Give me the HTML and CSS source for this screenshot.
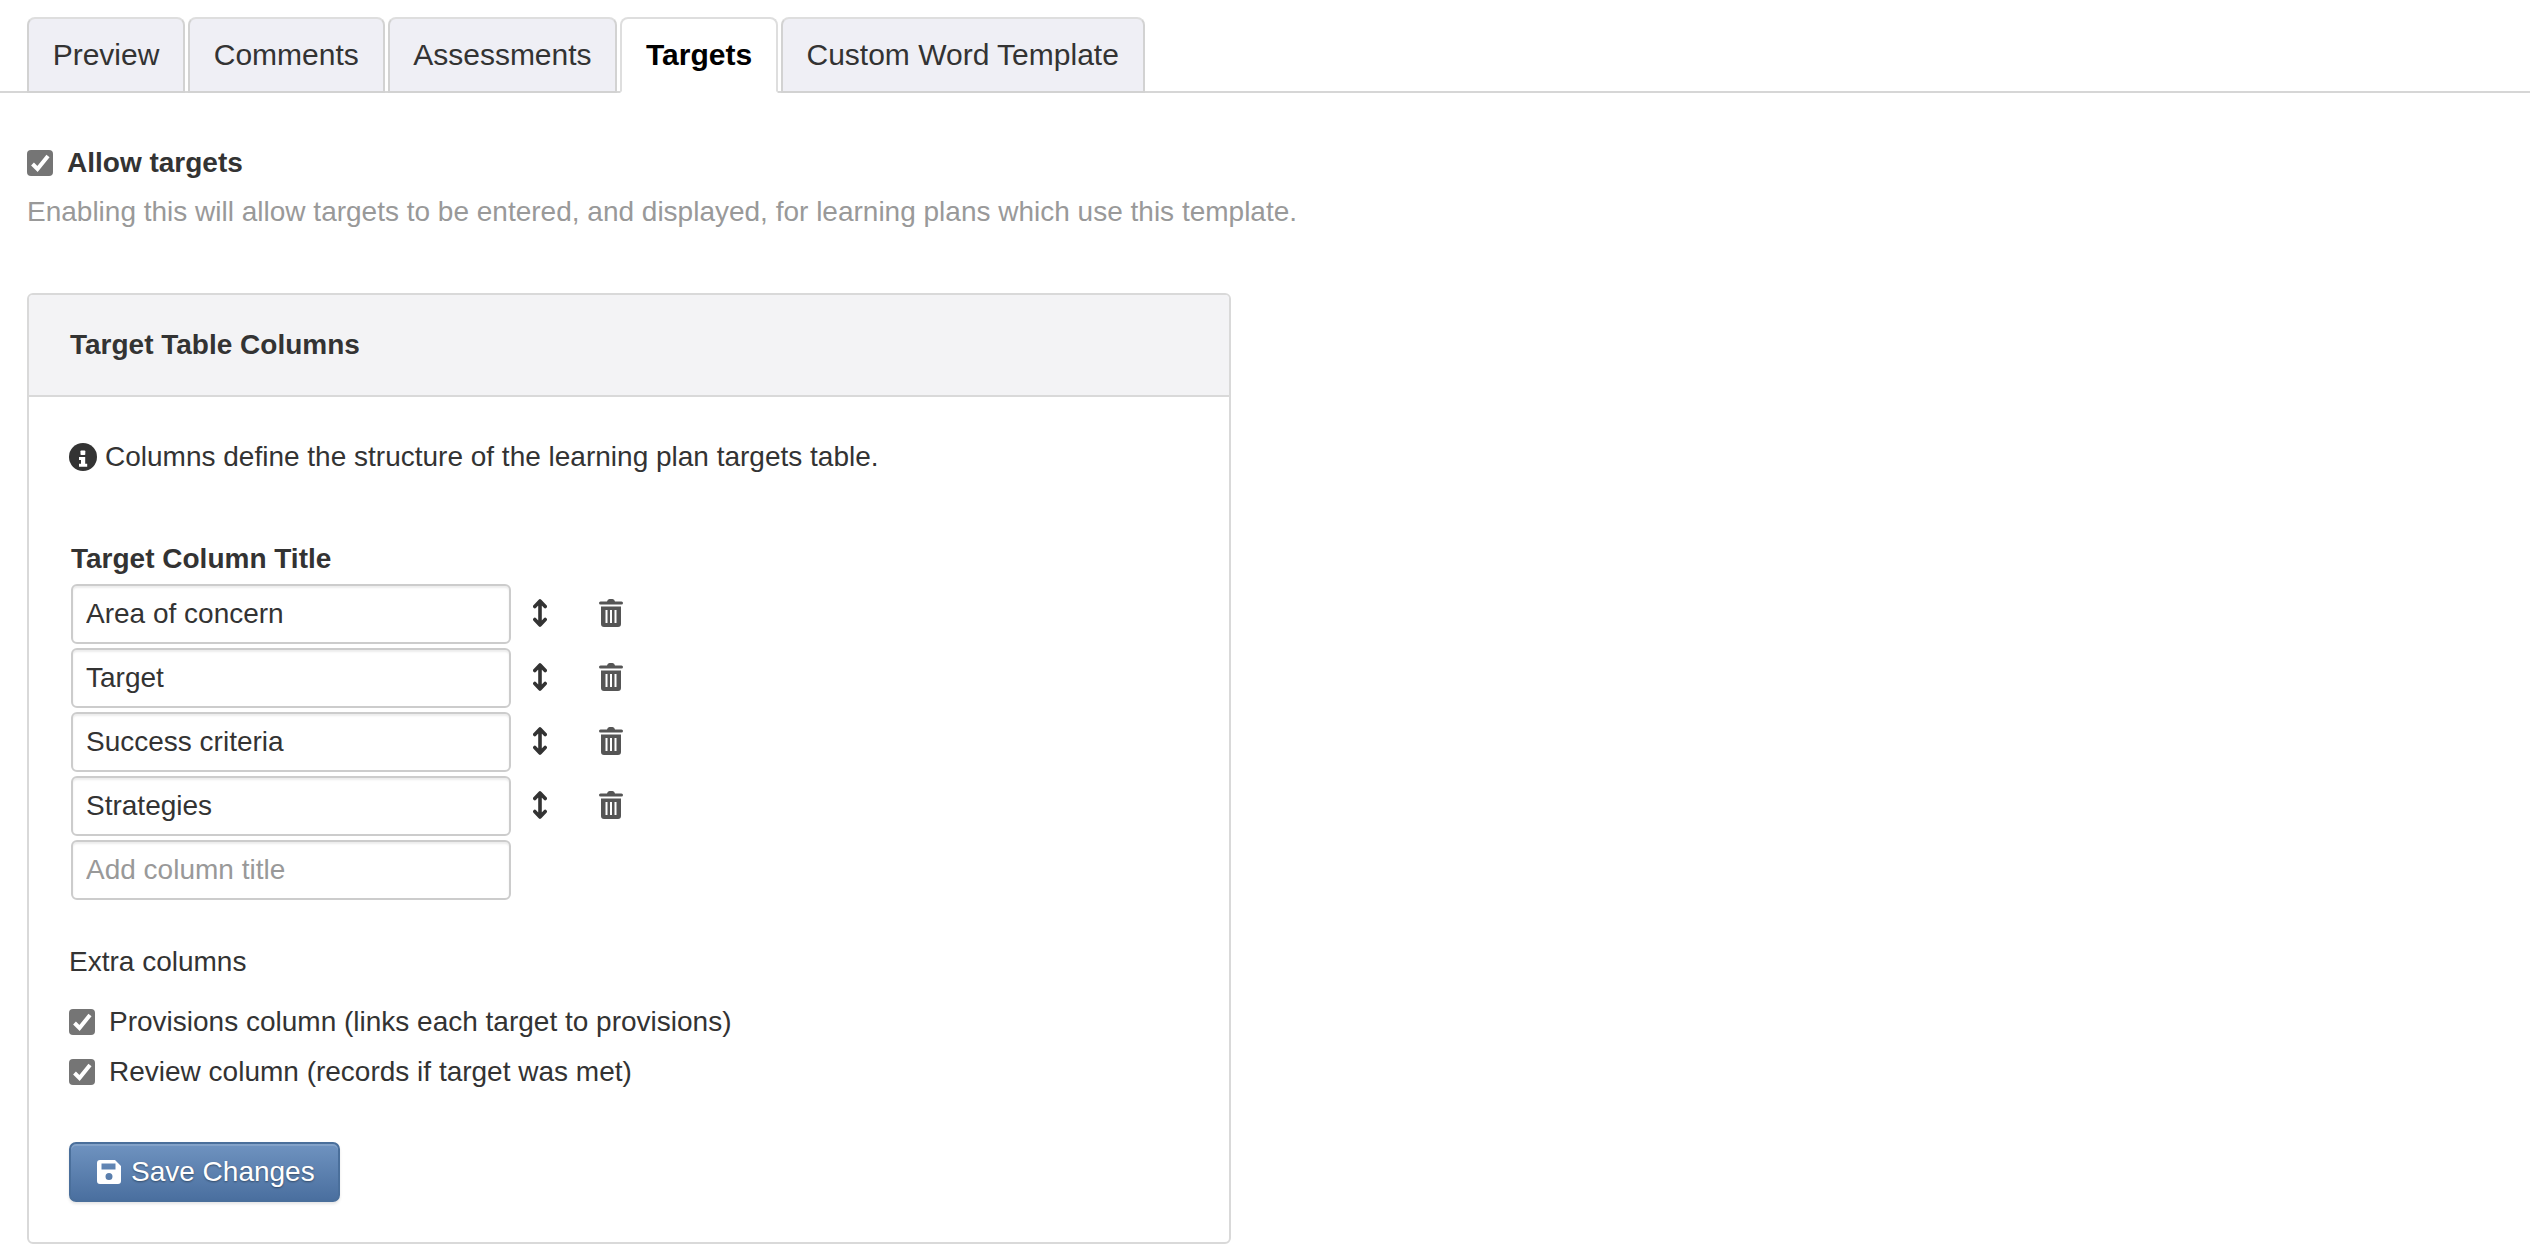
FILE: index.html
```html
<!DOCTYPE html>
<html lang="en">
<head>
<meta charset="utf-8">
<title>Targets</title>
<link rel="stylesheet" href="styles.css">
</head>
<body>
<nav class="tabs">
  <a class="tab">Preview</a>
  <a class="tab">Comments</a>
  <a class="tab">Assessments</a>
  <a class="tab active">Targets</a>
  <a class="tab">Custom Word Template</a>
</nav>
<main class="content">
  <label class="check-row allow">
    <span class="check"><svg viewBox="0 0 26 26"><path d="M5.500 14l5 5 10.500-13" /></svg></span>
    <strong>Allow targets</strong>
  </label>
  <p class="help">Enabling this will allow targets to be entered, and displayed, for learning plans which use this template.</p>
  <section class="panel">
    <header class="panel-head">Target Table Columns</header>
    <div class="panel-body">
      <p class="info">
        <svg class="info-icon" viewBox="0 0 28 28"><circle cx="14" cy="14" r="14" fill="#333"/><rect x="11.500" y="7.500" width="4.800" height="4.500" rx=".8" fill="#fff"/><path d="M10 14h6.200v6.800h2v3H10v-3h2v-3.800h-2z" fill="#fff"/></svg>
        <span>Columns define the structure of the learning plan targets table.</span>
      </p>
      <div class="col-label">Target Column Title</div>
      <div class="rows">
        <div class="row">
          <input class="field" type="text" value="Area of concern">
          <svg class="arrow" viewBox="0 0 14 28"><path d="M7 2v24M1.800 7.500L7 2l5.200 5.500M1.800 20.500L7 26l5.200-5.500"/></svg>
          <svg class="trash" viewBox="0 0 24 28"><path fill-rule="evenodd" d="M8 2.500Q8.500 0 10.500 0h3Q15.500 0 16 2.500h6.500Q24 2.500 24 4t-1.500 1.500h-21Q0 5.500 0 4t1.500-1.500zM2 7.500h20V25q0 3-3 3H5q-3 0-3-3zM6.500 11v13h2V11zM11 11v13h2V11zM15.500 11v13h2V11z"/></svg>
        </div>
        <div class="row">
          <input class="field" type="text" value="Target">
          <svg class="arrow" viewBox="0 0 14 28"><path d="M7 2v24M1.800 7.500L7 2l5.200 5.500M1.800 20.500L7 26l5.200-5.500"/></svg>
          <svg class="trash" viewBox="0 0 24 28"><path fill-rule="evenodd" d="M8 2.500Q8.500 0 10.500 0h3Q15.500 0 16 2.500h6.500Q24 2.500 24 4t-1.500 1.500h-21Q0 5.500 0 4t1.500-1.500zM2 7.500h20V25q0 3-3 3H5q-3 0-3-3zM6.500 11v13h2V11zM11 11v13h2V11zM15.500 11v13h2V11z"/></svg>
        </div>
        <div class="row">
          <input class="field" type="text" value="Success criteria">
          <svg class="arrow" viewBox="0 0 14 28"><path d="M7 2v24M1.800 7.500L7 2l5.200 5.500M1.800 20.500L7 26l5.200-5.500"/></svg>
          <svg class="trash" viewBox="0 0 24 28"><path fill-rule="evenodd" d="M8 2.500Q8.500 0 10.500 0h3Q15.500 0 16 2.500h6.500Q24 2.500 24 4t-1.500 1.500h-21Q0 5.500 0 4t1.500-1.500zM2 7.500h20V25q0 3-3 3H5q-3 0-3-3zM6.500 11v13h2V11zM11 11v13h2V11zM15.500 11v13h2V11z"/></svg>
        </div>
        <div class="row">
          <input class="field" type="text" value="Strategies">
          <svg class="arrow" viewBox="0 0 14 28"><path d="M7 2v24M1.800 7.500L7 2l5.200 5.500M1.800 20.500L7 26l5.200-5.500"/></svg>
          <svg class="trash" viewBox="0 0 24 28"><path fill-rule="evenodd" d="M8 2.500Q8.500 0 10.500 0h3Q15.500 0 16 2.500h6.500Q24 2.500 24 4t-1.500 1.500h-21Q0 5.500 0 4t1.500-1.500zM2 7.500h20V25q0 3-3 3H5q-3 0-3-3zM6.500 11v13h2V11zM11 11v13h2V11zM15.500 11v13h2V11z"/></svg>
        </div>
        <div class="row">
          <input class="field" type="text" placeholder="Add column title">
        </div>
      </div>
      <div class="extra">Extra columns</div>
      <label class="check-row opt first">
        <span class="check"><svg viewBox="0 0 26 26"><path d="M5.500 14l5 5 10.500-13" /></svg></span>
        <span>Provisions column (links each target to provisions)</span>
      </label>
      <label class="check-row opt">
        <span class="check"><svg viewBox="0 0 26 26"><path d="M5.500 14l5 5 10.500-13" /></svg></span>
        <span>Review column (records if target was met)</span>
      </label>
      <button class="save" type="button">
        <svg class="save-icon" viewBox="0 0 24 24"><path fill-rule="evenodd" d="M3 0h15l6 6v15q0 3-3 3H3q-3 0-3-3V3q0-3 3-3zM4.500 3.500v6h14v-6zM12 13a3.500 3.500 0 1 0 0 7 3.500 3.500 0 0 0 0-7z"/></svg>
        <span>Save Changes</span>
      </button>
    </div>
  </section>
</main>
</body>
</html>
```
FILE: styles.css
```css
* { box-sizing: border-box; }
html, body { margin: 0; padding: 0; background: #fff; }
body {
  font-family: "Liberation Sans", Arial, sans-serif;
  font-size: 28px;
  color: #333;
  width: 2530px;
  height: 1258px;
  overflow: hidden;
}
.tabs {
  display: flex;
  gap: 3px;
  height: 93px;
  padding: 17px 0 0 27px;
  border-bottom: 2px solid #d6d6d6;
}
.tab {
  display: block;
  height: 76px;
  padding: 0 23.7px;
  font-size: 30px;
  line-height: 71px;
  color: #333;
  background: #efeff5;
  border: 2px solid #d2d2d2;
  border-top-color: #dedede;
  border-radius: 8px 8px 0 0;
}
.tab.active {
  font-weight: bold;
  color: #000;
  background: #fff;
  border-color: #dedede;
  border-bottom-color: #fff;
}
.content { padding-left: 27px; }
.check-row {
  display: flex;
  align-items: center;
}
.check {
  flex: none;
  width: 26px;
  height: 26px;
  margin-right: 14px;
  background: #757575;
  border-radius: 4px;
}
.check svg { display: block; width: 26px; height: 26px; }
.check path { fill: none; stroke: #fff; stroke-width: 4; }
.allow { height: 34px; margin-top: 53px; }
.help {
  margin: 11px 0 0;
  line-height: 42px;
  color: #999;
}
.panel {
  width: 1204px;
  margin-top: 60px;
  border: 2px solid #d9d9d9;
  border-radius: 6px;
}
.panel-head {
  height: 102px;
  padding-left: 41px;
  line-height: 99px;
  font-weight: bold;
  background: #f3f3f5;
  border-bottom: 2px solid #d9d9d9;
  border-radius: 4px 4px 0 0;
}
.panel-body { padding: 39px 40px 40px; }
.info {
  display: flex;
  align-items: center;
  gap: 8px;
  height: 42px;
  margin: 0;
}
.info-icon { flex: none; width: 28px; height: 28px; }
.col-label {
  margin: 63px 0 7px 2px;
  line-height: 36px;
  font-weight: bold;
}
.rows {
  display: flex;
  flex-direction: column;
  gap: 4px;
  margin-left: 2px;
}
.row {
  display: flex;
  align-items: center;
  height: 60px;
}
.field {
  width: 440px;
  height: 60px;
  padding: 0 13px;
  font: inherit;
  color: #333;
  background: #fff;
  border: 2px solid #ccc;
  border-radius: 6px;
  box-shadow: inset 0 2px 2px rgba(0, 0, 0, .08);
  outline: none;
}
.field::placeholder { color: #999; opacity: 1; }
.arrow {
  flex: none;
  width: 14px;
  height: 28px;
  margin: 0 0 2px 22px;
  fill: none;
  stroke: #333;
  stroke-width: 3.6;
  stroke-linecap: round;
  stroke-linejoin: round;
}
.trash {
  flex: none;
  width: 24px;
  height: 28px;
  margin: 0 0 2px 52px;
  fill: #555;
}
.extra { margin-top: 41px; line-height: 42px; }
.opt { height: 40px; margin-top: 10px; }
.opt.first { margin-top: 19px; }
.save {
  display: flex;
  align-items: center;
  gap: 10px;
  width: 271px;
  height: 60px;
  margin-top: 50px;
  padding: 0 0 0 26px;
  font: inherit;
  color: #fff;
  text-shadow: 0 1px 2px rgba(0, 0, 0, .4);
  background: linear-gradient(#6f93c0, #4a6f9f);
  border: 2px solid #4a6f9b;
  border-radius: 7px;
  box-shadow: inset 0 2px 0 rgba(255, 255, 255, .15), 0 2px 3px rgba(0, 0, 0, .1);
}
.save-icon { flex: none; width: 24px; height: 24px; fill: #fff; }
```
